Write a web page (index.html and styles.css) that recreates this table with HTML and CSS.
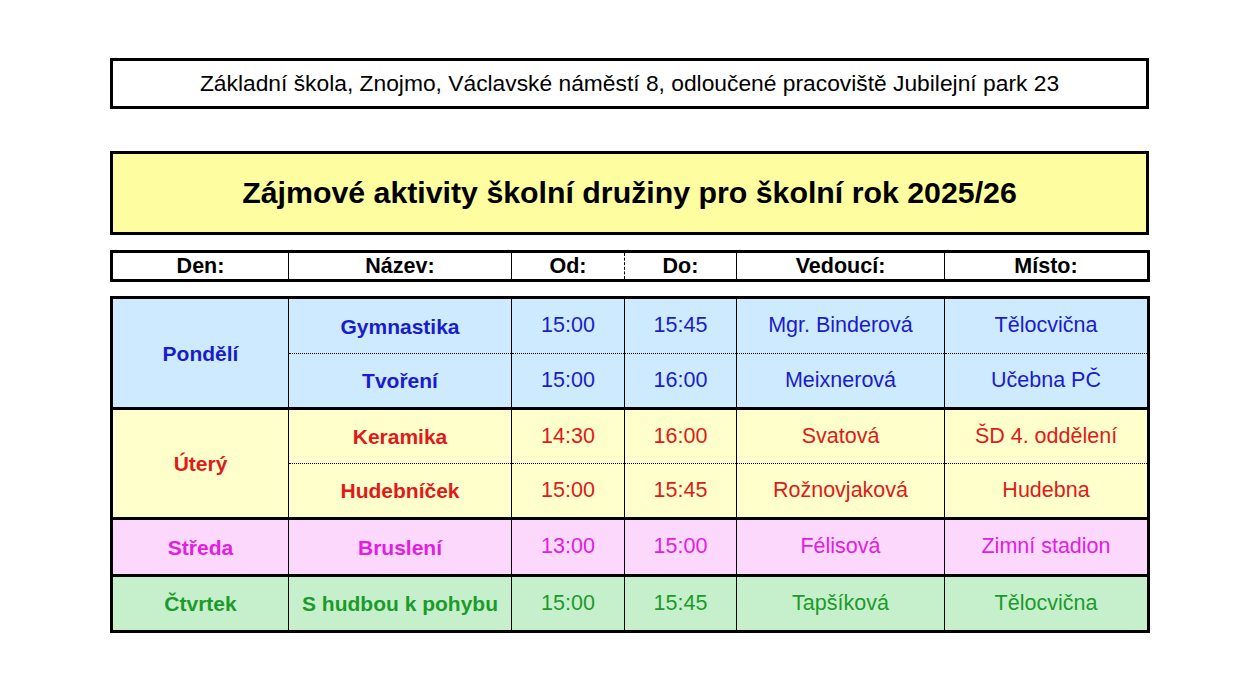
FILE: index.html
```html
<!DOCTYPE html>
<html lang="cs">
<head>
<meta charset="utf-8">
<title>Zájmové aktivity školní družiny</title>
<link rel="stylesheet" href="styles.css">
</head>
<body>
<div class="page">
  <div class="school">Základní škola, Znojmo, Václavské náměstí 8, odloučené pracoviště Jubilejní park 23</div>
  <h1 class="title">Zájmové aktivity školní družiny pro školní rok 2025/26</h1>
  <table class="head">
    <colgroup>
      <col class="c1"><col class="c2"><col class="c3"><col class="c4"><col class="c5"><col class="c6">
    </colgroup>
    <tr>
      <th>Den:</th><th>Název:</th><th class="od">Od:</th><th class="do">Do:</th><th>Vedoucí:</th><th>Místo:</th>
    </tr>
  </table>
  <table class="plan">
    <colgroup>
      <col class="c1"><col class="c2"><col class="c3"><col class="c4"><col class="c5"><col class="c6">
    </colgroup>
    <tbody class="mon">
      <tr class="top">
        <td class="day" rowspan="2">Pondělí</td><td class="name">Gymnastika</td><td>15:00</td><td>15:45</td><td>Mgr. Binderová</td><td>Tělocvična</td>
      </tr>
      <tr class="sub">
        <td class="name">Tvoření</td><td>15:00</td><td>16:00</td><td>Meixnerová</td><td>Učebna PČ</td>
      </tr>
    </tbody>
    <tbody class="tue">
      <tr class="top">
        <td class="day" rowspan="2">Úterý</td><td class="name">Keramika</td><td>14:30</td><td>16:00</td><td>Svatová</td><td>ŠD 4. oddělení</td>
      </tr>
      <tr class="sub">
        <td class="name">Hudebníček</td><td>15:00</td><td>15:45</td><td>Rožnovjaková</td><td>Hudebna</td>
      </tr>
    </tbody>
    <tbody class="wed">
      <tr class="top">
        <td class="day">Středa</td><td class="name">Bruslení</td><td>13:00</td><td>15:00</td><td>Félisová</td><td>Zimní stadion</td>
      </tr>
    </tbody>
    <tbody class="thu">
      <tr class="top">
        <td class="day">Čtvrtek</td><td class="name">S hudbou k pohybu</td><td>15:00</td><td>15:45</td><td>Tapšíková</td><td>Tělocvična</td>
      </tr>
    </tbody>
  </table>
</div>
</body>
</html>
```
FILE: styles.css
```css
html, body {
  margin: 0;
  padding: 0;
  background: #ffffff;
}
body {
  font-family: "Liberation Sans", Arial, sans-serif;
  color: #000;
}
.page {
  width: 1039px;
  margin-left: 110px;
  padding-top: 58px;
  display: flex;
  flex-direction: column;
}
.school {
  box-sizing: border-box;
  height: 51px;
  border: 3px solid #000;
  display: flex;
  align-items: center;
  justify-content: center;
  font-size: 22.8px;
}
.title {
  box-sizing: border-box;
  margin: 42px 0 0 0;
  height: 84px;
  border: 3px solid #000;
  background: #fefea0;
  display: flex;
  align-items: center;
  justify-content: center;
  font-size: 30.3px;
  font-weight: bold;
}
table {
  border-collapse: collapse;
  table-layout: fixed;
  width: 1037px;
}
.c1 { width: 177px; }
.c2 { width: 223px; }
.c3 { width: 113px; }
.c4 { width: 112px; }
.c5 { width: 208px; }
.c6 { width: 204px; }

.head {
  margin-top: 15px;
  border: 3px solid #000;
}
.head th {
  height: 26px;
  padding: 0;
  border-left: 1px solid #000;
  font-size: 21.5px;
  font-weight: bold;
  text-align: center;
  vertical-align: middle;
}
.head th.do {
  border-left: 1px dashed #000;
}

.plan {
  margin-top: 14px;
  border: 3px solid #000;
}
.plan tbody {
  border-top: 3px solid #000;
}
.plan td {
  height: 53px;
  padding: 0;
  border-left: 1px solid #000;
  font-size: 21.5px;
  line-height: 1;
  text-align: center;
  vertical-align: middle;
}
.plan .mon tr.top td,
.plan .wed td {
  height: 54px;
}
.plan tr.sub td {
  border-top: 1px dotted #000;
}
.plan td.day,
.plan td.name {
  font-weight: bold;
  font-size: 21px;
}

.mon td { background: #cdeafe; color: #1a1ccc; }
.tue td { background: #ffffcc; color: #e01a1a; }
.wed td { background: #fdd8fd; color: #e020df; }
.thu td { background: #c6f0cb; color: #1c9a2b; }
```
